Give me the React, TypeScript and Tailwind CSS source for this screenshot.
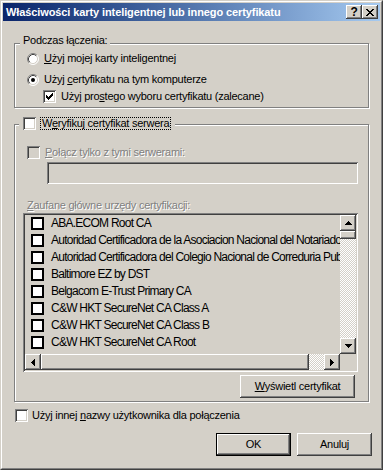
import React from "react";

const raised =
  "shadow-[inset_-1px_-1px_#404040,inset_1px_1px_#fff,inset_-2px_-2px_#808080,inset_2px_2px_#d4d0c8]";
const sunken =
  "shadow-[inset_1px_1px_#808080,inset_-1px_-1px_#fff,inset_2px_2px_#404040,inset_-2px_-2px_#d4d0c8]";
const disabledText = "text-[#808080] [text-shadow:1px_1px_0_#fff]";

function CheckMark() {
  const cols = [2, 3, 4, 3, 2, 1, 0];
  return (
    <svg width="7" height="7" viewBox="0 0 7 7" shapeRendering="crispEdges">
      {cols.map((y, x) => (
        <rect key={x} x={x} y={y} width="1" height="3" fill="#000" />
      ))}
    </svg>
  );
}

function Checkbox({ checked = false, disabled = false }: { checked?: boolean; disabled?: boolean }) {
  return (
    <div
      className={
        "w-[13px] h-[13px] shrink-0 flex items-center justify-center " +
        sunken +
        (disabled ? " bg-[#d4d0c8]" : " bg-white")
      }
    >
      {checked && <CheckMark />}
    </div>
  );
}

function Radio({ checked = false }: { checked?: boolean }) {
  return (
    <svg width="12" height="12" viewBox="0 0 12 12" className="shrink-0">
      <circle cx="6" cy="6" r="5" fill="#fff" />
      <path d="M2.11 9.89 A5.5 5.5 0 0 1 9.89 2.11" stroke="#808080" strokeWidth="1" fill="none" />
      <path d="M9.89 2.11 A5.5 5.5 0 0 1 2.11 9.89" stroke="#ffffff" strokeWidth="1" fill="none" />
      <path d="M2.82 9.18 A4.5 4.5 0 0 1 9.18 2.82" stroke="#404040" strokeWidth="1" fill="none" />
      <path d="M9.18 2.82 A4.5 4.5 0 0 1 2.82 9.18" stroke="#d4d0c8" strokeWidth="1" fill="none" />
      {checked && <circle cx="6" cy="6" r="2" fill="#000" />}
    </svg>
  );
}

function ArrowUp() {
  return (
    <svg width="7" height="4" viewBox="0 0 7 4" shapeRendering="crispEdges">
      <rect x="3" y="0" width="1" height="1" fill="#000" />
      <rect x="2" y="1" width="3" height="1" fill="#000" />
      <rect x="1" y="2" width="5" height="1" fill="#000" />
      <rect x="0" y="3" width="7" height="1" fill="#000" />
    </svg>
  );
}
function ArrowDown() {
  return (
    <svg width="7" height="4" viewBox="0 0 7 4" shapeRendering="crispEdges">
      <rect x="0" y="0" width="7" height="1" fill="#000" />
      <rect x="1" y="1" width="5" height="1" fill="#000" />
      <rect x="2" y="2" width="3" height="1" fill="#000" />
      <rect x="3" y="3" width="1" height="1" fill="#000" />
    </svg>
  );
}
function ArrowLeft() {
  return (
    <svg width="4" height="7" viewBox="0 0 4 7" shapeRendering="crispEdges">
      <rect x="0" y="3" width="1" height="1" fill="#000" />
      <rect x="1" y="2" width="1" height="3" fill="#000" />
      <rect x="2" y="1" width="1" height="5" fill="#000" />
      <rect x="3" y="0" width="1" height="7" fill="#000" />
    </svg>
  );
}
function ArrowRight() {
  return (
    <svg width="4" height="7" viewBox="0 0 4 7" shapeRendering="crispEdges">
      <rect x="0" y="0" width="1" height="7" fill="#000" />
      <rect x="1" y="1" width="1" height="5" fill="#000" />
      <rect x="2" y="2" width="1" height="3" fill="#000" />
      <rect x="3" y="3" width="1" height="1" fill="#000" />
    </svg>
  );
}

function CloseGlyph() {
  return (
    <svg width="8" height="7" viewBox="0 0 8 7" shapeRendering="crispEdges">
      <path d="M0 0h2v1h-2z M1 1h2v1h-2z M2 2h2v1h-2z M3 3h2v1h-2z M2 4h2v1h-2z M1 5h2v1h-2z M0 6h2v1h-2z" fill="#000" />
      <path d="M6 0h2v1h-2z M5 1h2v1h-2z M4 2h2v1h-2z M4 4h2v1h-2z M5 5h2v1h-2z M6 6h2v1h-2z" fill="#000" />
    </svg>
  );
}

const items = [
  "ABA.ECOM Root CA",
  "Autoridad Certificadora de la Asociacion Nacional del Notariado Mexicano",
  "Autoridad Certificadora del Colegio Nacional de Correduria Publica Mexicana",
  "Baltimore EZ by DST",
  "Belgacom E-Trust Primary CA",
  "C&W HKT SecureNet CA Class A",
  "C&W HKT SecureNet CA Class B",
  "C&W HKT SecureNet CA Root",
];

export default function App() {
  return (
    <div className="w-[383px] h-[470px] bg-[#d4d0c8] border border-t-[#d4d0c8] border-l-[#d4d0c8] border-r-[#404040] border-b-[#404040] font-['Liberation_Sans',Arial,sans-serif] text-[11px] leading-[13px] text-black tracking-[-0.25px]">
      <div className="h-full border border-t-white border-l-white border-r-[#808080] border-b-[#808080] p-px flex flex-col">
        {/* Title bar */}
        <div className="h-[18px] shrink-0 flex items-center bg-linear-to-r from-[#0a246a] to-[#a6caf0] pl-[3px] pr-[2px]">
          <span className="font-bold text-white tracking-[-0.1px]">
            Właściwości karty inteligentnej lub innego certyfikatu
          </span>
          <div className="ml-auto flex">
            <div className={"w-[16px] h-[14px] bg-[#d4d0c8] flex items-center justify-center " + raised}>
              <span className="font-['Liberation_Sans',sans-serif] text-[12px] leading-[12px] font-bold">?</span>
            </div>
            <div className={"w-[16px] h-[14px] bg-[#d4d0c8] flex items-center justify-center " + raised}>
              <CloseGlyph />
            </div>
          </div>
        </div>

        {/* Body */}
        <div className="flex flex-col">
          {/* Group 1 */}
          <div className="relative ml-[11px] mt-[22px] w-[355px] h-[65px] border border-[#808080] shadow-[inset_1px_1px_#fff,1px_1px_#fff] pt-[8px] pl-[12px]">
            <div className="absolute left-[5px] top-[-10px] px-[3px] bg-[#d4d0c8]">Podczas łączenia:</div>
            <div className="h-[13px] flex items-center gap-[5px]">
              <Radio />
              <span>
                <span className="underline underline-offset-[1px]">U</span>żyj mojej karty inteligentnej
              </span>
            </div>
            <div className="mt-[8px] h-[13px] flex items-center gap-[5px]">
              <Radio checked />
              <span>
                Użyj <span className="underline underline-offset-[1px]">c</span>ertyfikatu na tym komputerze
              </span>
            </div>
            <div className="mt-[4px] ml-[16px] h-[13px] flex items-center gap-[5px]">
              <Checkbox checked />
              <span>
                Użyj pro<span className="underline underline-offset-[1px]">s</span>tego wyboru certyfikatu (zalecane)
              </span>
            </div>
          </div>

          {/* Group 2 */}
          <div className="relative ml-[11px] mt-[16px] w-[355px] h-[278px] border border-[#808080] shadow-[inset_1px_1px_#fff,1px_1px_#fff] pt-[21px] flex flex-col">
            <div className="absolute left-[4px] top-[-8px] px-[4px] bg-[#d4d0c8] flex items-center gap-[4px] h-[13px]">
              <Checkbox />
              <span className="border border-dotted border-black px-px leading-[11px]">
                W<span className="underline underline-offset-[1px]">e</span>ryfikuj certyfikat serwera
              </span>
            </div>

            <div className="ml-[12px] h-[13px] flex items-center gap-[5px]">
              <Checkbox disabled />
              <span className={disabledText}>
                <span className="underline underline-offset-[1px]">P</span>ołącz tylko z tymi serwerami:
              </span>
            </div>
            <div className={"ml-[32px] mt-[3px] w-[311px] h-[22px] bg-[#d4d0c8] " + sunken}></div>

            <div className={"ml-[12px] mt-[15px] h-[13px] " + disabledText}>
              <span className="underline underline-offset-[1px]">Z</span>aufane główne urzędy certyfikacji:
            </div>

            {/* List */}
            <div className={"ml-[8px] mt-[1px] w-[335px] h-[159px] p-[2px] flex flex-col bg-[#d4d0c8] " + sunken}>
              <div className="flex h-[139px]">
                <div className="w-[315px] overflow-hidden text-[12px] tracking-[-0.75px]">
                  {items.map((t) => (
                    <div key={t} className="h-[17px] flex items-center pl-[6px] gap-[7px] whitespace-nowrap">
                      <div className="w-[13px] h-[13px] shrink-0 border-2 border-black bg-white"></div>
                      <span>{t}</span>
                    </div>
                  ))}
                </div>
                <div className="w-[16px] flex flex-col">
                  <div className={"h-[16px] flex items-center justify-center bg-[#d4d0c8] " + raised}>
                    <ArrowUp />
                  </div>
                  <div className={"h-[8px] bg-[#d4d0c8] " + raised}></div>
                  <div className="flex-1 bg-[repeating-conic-gradient(#fff_0_25%,#d4d0c8_0_50%)] bg-size-[2px_2px]"></div>
                  <div className={"h-[16px] flex items-center justify-center bg-[#d4d0c8] " + raised}>
                    <ArrowDown />
                  </div>
                </div>
              </div>
              <div className="flex h-[16px]">
                <div className="w-[315px] flex">
                  <div className={"w-[16px] flex items-center justify-center bg-[#d4d0c8] " + raised}>
                    <ArrowLeft />
                  </div>
                  <div className={"w-[268px] bg-[#d4d0c8] " + raised}></div>
                  <div className="flex-1 bg-[repeating-conic-gradient(#fff_0_25%,#d4d0c8_0_50%)] bg-size-[2px_2px]"></div>
                  <div className={"w-[16px] flex items-center justify-center bg-[#d4d0c8] " + raised}>
                    <ArrowRight />
                  </div>
                </div>
                <div className="w-[16px] bg-[#d4d0c8]"></div>
              </div>
            </div>

            <div className={"ml-[225px] mt-[3px] w-[115px] h-[23px] flex items-center justify-center bg-[#d4d0c8] " + raised}>
              <span>
                <span className="underline underline-offset-[1px]">W</span>yświetl certyfikat
              </span>
            </div>
          </div>

          {/* Bottom checkbox */}
          <div className="ml-[12px] mt-[7px] h-[13px] flex items-center gap-[4px]">
            <Checkbox />
            <span>
              Użyj innej <span className="underline underline-offset-[1px]">n</span>azwy użytkownika dla połączenia
            </span>
          </div>

          {/* Buttons */}
          <div className="mt-[11px] mr-[8px] flex justify-end gap-[6px]">
            <div className="w-[75px] h-[23px] flex items-center justify-center bg-[#d4d0c8] shadow-[inset_0_0_0_1px_#000,inset_-2px_-2px_#404040,inset_2px_2px_#fff,inset_-3px_-3px_#808080,inset_3px_3px_#d4d0c8]">
              OK
            </div>
            <div className={"w-[75px] h-[23px] flex items-center justify-center bg-[#d4d0c8] " + raised}>
              Anuluj
            </div>
          </div>
        </div>
      </div>
    </div>
  );
}
